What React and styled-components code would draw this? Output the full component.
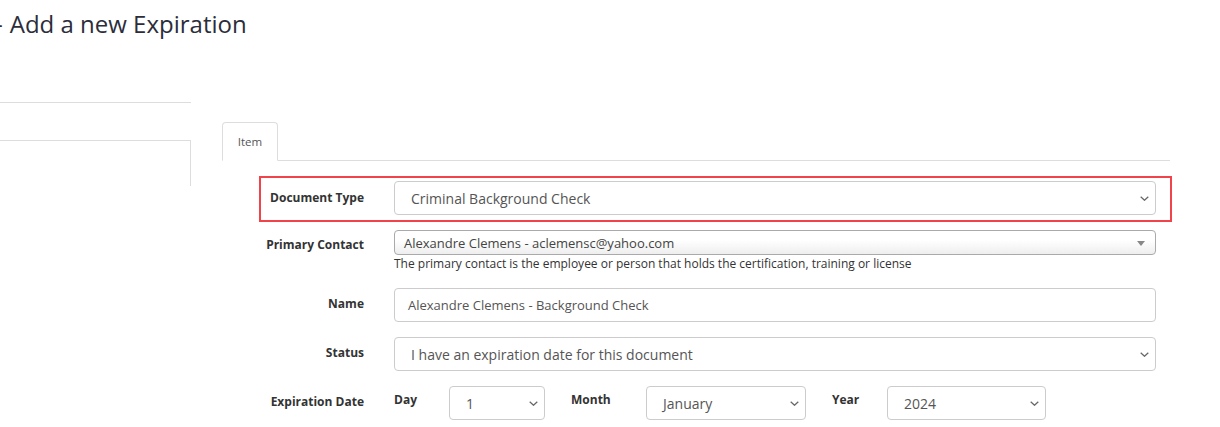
import React from "react";
import styled, { createGlobalStyle } from "styled-components";

const Global = createGlobalStyle`
  html, body { margin: 0; padding: 0; background: #fff; }
  body { font-family: "Open Sans", "Liberation Sans", Arial, sans-serif; color: #333; overflow: hidden; }
  * { box-sizing: border-box; }
`;

const Page = styled.div`
  width: 1220px;
  height: 427px;
  overflow: hidden;
`;

const Header = styled.div`
  height: 102px;
  padding-top: 7px;
`;

const Title = styled.h1`
  margin: 0;
  font-size: 24px;
  line-height: 34px;
  font-weight: 400;
  color: #2b2d3b;
  white-space: nowrap;
`;

const Lead = styled.span`
  display: inline-block;
  margin-left: -5px;
  margin-right: 7px;
`;

const Content = styled.div`
  display: flex;
  align-items: flex-start;
`;

const Sidebar = styled.div`
  width: 191px;
  flex: none;
  border-top: 1px solid #ddd;
  padding-top: 37px;
`;

const SideBox = styled.div`
  height: 46px;
  border-top: 1px solid #ddd;
  border-right: 1px solid #ddd;
`;

const Main = styled.div`
  margin-left: 31px;
  width: 948px;
  padding-top: 20px;
`;

const Tabs = styled.div`
  display: flex;
  border-bottom: 1px solid #ddd;
`;

const Tab = styled.div`
  width: 56px;
  height: 39px;
  border: 1px solid #ddd;
  border-bottom-color: #fff;
  margin-bottom: -1px;
  border-radius: 4px 4px 0 0;
  background: #fff;
  display: flex;
  align-items: center;
  justify-content: center;
  font-size: 11.5px;
  color: #555;
`;

const Form = styled.div`
  margin-top: 15px;
  margin-left: 37px;
  width: 913px;
`;

const Row = styled.div`
  display: grid;
  grid-template-columns: 103px 1fr;
  column-gap: 30px;
  padding: ${(p) => (p.$highlight ? "3px 14px 5px 0" : "0 16px 0 2px")};
  border: ${(p) => (p.$highlight ? "2px solid #f0434a" : "none")};
  margin-bottom: ${(p) => p.$mb}px;
`;

const Label = styled.div`
  text-align: right;
  font-weight: 700;
  font-size: 12px;
  line-height: 20px;
  padding-top: ${(p) => p.$pt ?? 6}px;
  color: #333;
  white-space: nowrap;
`;

const Control = styled.div`
  display: flex;
  flex-direction: column;
`;

const SelectBox = styled.div`
  position: relative;
  height: 34px;
  width: ${(p) => (p.$w ? `${p.$w}px` : "100%")};
  border: 1px solid #ccc;
  border-radius: 4px;
  background: #fff;
  display: flex;
  align-items: center;
  padding-left: 16px;
  font-size: ${(p) => p.$fs || 14}px;
  color: #555;
  white-space: nowrap;
`;

const Input = styled(SelectBox)`
  padding-left: 13px;
`;

const Chevron = styled.svg`
  position: absolute;
  right: ${(p) => p.$r || 6}px;
  top: 50%;
  margin-top: -2px;
`;

const ContactSelect = styled.div`
  position: relative;
  height: 25px;
  border: 1px solid #aaa;
  border-radius: 4px;
  background: linear-gradient(to bottom, #fff 0%, #fff 40%, #eee 100%);
  display: flex;
  align-items: center;
  padding-left: 9px;
  font-size: 13px;
  color: #444;
  white-space: nowrap;
`;

const Triangle = styled.span`
  position: absolute;
  right: 10px;
  top: 10px;
  width: 0;
  height: 0;
  border-left: 4px solid transparent;
  border-right: 4px solid transparent;
  border-top: 5px solid #888;
`;

const Help = styled.div`
  margin-top: 1px;
  font-size: 12px;
  line-height: 16px;
  color: #333;
  white-space: nowrap;
`;

const DateGroup = styled.div`
  display: flex;
  align-items: flex-start;
`;

const SubLabel = styled.div`
  width: ${(p) => p.$w}px;
  margin-left: ${(p) => p.$ml || 0}px;
  font-weight: 700;
  font-size: 12px;
  line-height: 20px;
  padding-top: 4px;
  color: #333;
  flex: none;
`;

const Chev = ({ r }) => (
  <Chevron $r={r} width="9" height="5" viewBox="0 0 9 5">
    <path d="M0.7 0.7 L4.5 4.3 L8.3 0.7" fill="none" stroke="#666" strokeWidth="1.2" />
  </Chevron>
);

export default function App() {
  return (
    <Page>
      <Global />
      <Header>
        <Title>
          <Lead>-</Lead>Add a new Expiration
        </Title>
      </Header>
      <Content>
        <Sidebar>
          <SideBox />
        </Sidebar>
        <Main>
          <Tabs>
            <Tab>Item</Tab>
          </Tabs>
          <Form>
            <Row $highlight $mb={8}>
              <Label $pt={7}>Document Type</Label>
              <Control>
                <SelectBox>
                  Criminal Background Check
                  <Chev r={6} />
                </SelectBox>
              </Control>
            </Row>
            <Row $mb={16}>
              <Label $pt={5}>Primary Contact</Label>
              <Control>
                <ContactSelect>
                  Alexandre Clemens - aclemensc@yahoo.com
                  <Triangle />
                </ContactSelect>
                <Help>
                  The primary contact is the employee or person that holds the certification, training or license
                </Help>
              </Control>
            </Row>
            <Row $mb={15}>
              <Label $pt={6}>Name</Label>
              <Control>
                <Input $fs={13}>Alexandre Clemens - Background Check</Input>
              </Control>
            </Row>
            <Row $mb={15}>
              <Label $pt={6}>Status</Label>
              <Control>
                <SelectBox>
                  I have an expiration date for this document
                  <Chev r={6} />
                </SelectBox>
              </Control>
            </Row>
            <Row $mb={0}>
              <Label $pt={6}>Expiration Date</Label>
              <Control>
                <DateGroup>
                  <SubLabel $w={55}>Day</SubLabel>
                  <SelectBox $w={96}>
                    1
                    <Chev r={6} />
                  </SelectBox>
                  <SubLabel $w={75} $ml={26}>Month</SubLabel>
                  <SelectBox $w={160}>
                    January
                    <Chev r={6} />
                  </SelectBox>
                  <SubLabel $w={55} $ml={26}>Year</SubLabel>
                  <SelectBox $w={159}>
                    2024
                    <Chev r={6} />
                  </SelectBox>
                </DateGroup>
              </Control>
            </Row>
          </Form>
        </Main>
      </Content>
    </Page>
  );
}
